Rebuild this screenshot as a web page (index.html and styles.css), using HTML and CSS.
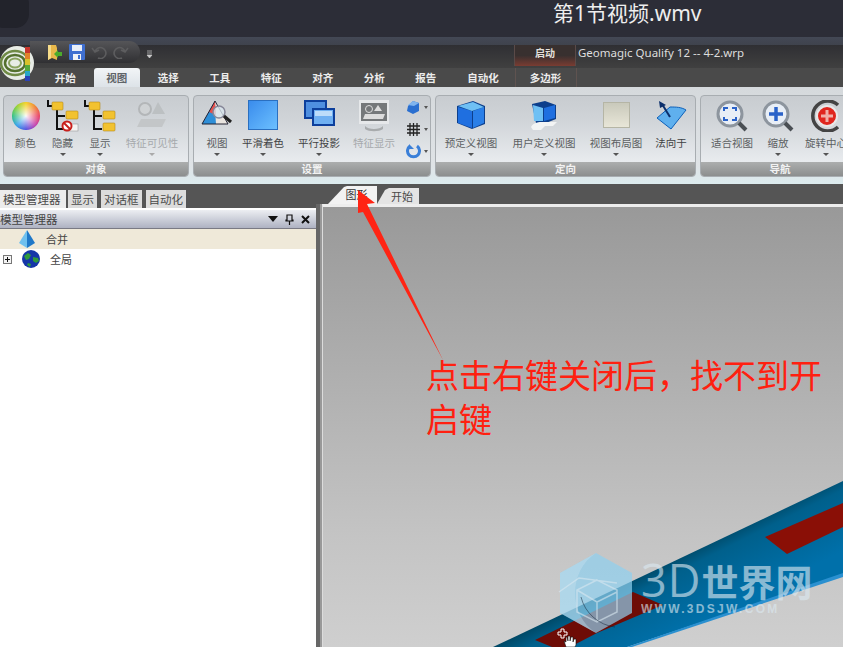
FILE: index.html
```html
<!DOCTYPE html>
<html lang="zh-CN">
<head>
  <meta charset="UTF-8" />
  <title>第1节视频.wmv</title>
  <link rel="stylesheet" href="styles.css">
</head>
<body>

<div class="stage">
  <!-- Player title bar -->
  <div class="player-bar">
    <div class="player-blob"></div>
    <div class="player-title">第1节视频.wmv</div>
  </div>
  <div class="app-band"></div>

  <!-- Application title row -->
  <div class="app-title">
    <div class="qat">
      <svg class="qat-icon" width="16" height="17" viewBox="0 0 16 17"><path d="M1 1h8l1 3v12l-5-2-4 2z" fill="#e9b84a"/><path d="M1 1h3v13l-3 2z" fill="#f6dc8a"/><path d="M7 10l4-4v2h4v4h-4v2z" fill="#4cab2c"/></svg>
      <svg class="qat-icon" width="16" height="16" viewBox="0 0 16 16"><rect width="16" height="16" rx="1" fill="#3f6fd0"/><rect x="3" y="1" width="10" height="6" fill="#e8eef8"/><rect x="4" y="10" width="8" height="6" fill="#f0f2f6"/><rect x="9" y="11" width="2" height="4" fill="#3f6fd0"/></svg>
      <svg class="qat-icon" width="16" height="14" viewBox="0 0 16 14"><path d="M4 7a5.500 5.500 0 1 1 3 6M1 3l3 4 4-2" fill="none" stroke="#5d5d5f" stroke-width="1.600"/></svg>
      <svg class="qat-icon" width="16" height="14" viewBox="0 0 16 14"><path d="M12 7a5.500 5.500 0 1 0-3 6M15 3l-3 4-4-2" fill="none" stroke="#5d5d5f" stroke-width="1.600"/></svg>
    </div>
    <svg class="qat-more" width="7" height="8" viewBox="0 0 7 8"><path d="M1 1h5M1 3h5M1 5l2.500 3L6 5z" fill="#ccc" stroke="#ccc" stroke-width=".7"/></svg>
    <div class="context-head">启动</div>
    <div class="doc-title">Geomagic Qualify 12 -- 4-2.wrp</div>
  </div>

  <!-- Ribbon tabs -->
  <div class="tabs">
    <div class="tab">开始</div>
    <div class="tab active"><span>视图</span></div>
    <div class="tab">选择</div>
    <div class="tab">工具</div>
    <div class="tab">特征</div>
    <div class="tab">对齐</div>
    <div class="tab">分析</div>
    <div class="tab">报告</div>
    <div class="tab tab-auto">自动化</div>
    <div class="tab tab-context">多边形</div>
  </div>

  <!-- Orb sits over the title row and the tabs -->
  <div class="orb">
    <svg width="36" height="37" viewBox="0 0 36 37">
      <circle cx="17" cy="18" r="17" fill="#e8ece6"/>
      <ellipse cx="15" cy="18" rx="14" ry="12" fill="none" stroke="#6f8a45" stroke-width="2.500"/>
      <ellipse cx="15" cy="18" rx="10" ry="8" fill="none" stroke="#54702e" stroke-width="2.500"/>
      <ellipse cx="15" cy="18" rx="6" ry="4.500" fill="#e8ece6" stroke="#8aa35f" stroke-width="2"/>
      <rect x="25" y="2" width="5" height="6" fill="#c8352c"/>
      <rect x="25" y="8" width="5" height="6" fill="#e0832a"/>
      <rect x="25" y="14" width="5" height="6" fill="#d8c22c"/>
      <rect x="25" y="20" width="5" height="6" fill="#55a83c"/>
      <rect x="25" y="26" width="5" height="5" fill="#2aa5c8"/>
      <rect x="25" y="31" width="5" height="5" fill="#2b42b8"/>
    </svg>
  </div>

  <!-- Ribbon -->
  <div class="ribbon">
    <div class="group group-object">
      <div class="items">
        <div class="item w37"><div class="icon"><div class="wheel"></div></div><div class="label">颜色</div></div>
        <div class="item w37">
          <div class="icon"><svg width="32" height="32" viewBox="0 0 32 32"><path d="M1 0v6h4M10 8v21h8M10 16h8" fill="none" stroke="#111" stroke-width="2"/><rect x="5" y="2" width="11" height="8" rx="1" fill="#f2c230" stroke="#b58a1a" stroke-width=".6"/><rect x="19" y="11" width="12" height="8" rx="1" fill="#f2c230" stroke="#b58a1a" stroke-width=".6"/><rect x="19" y="24" width="12" height="7" fill="#f4f4f2" stroke="#999" stroke-width=".6"/><circle cx="20" cy="26" r="4.500" fill="#fff" stroke="#c8201c" stroke-width="2"/><path d="M17 23l6 6" stroke="#c8201c" stroke-width="2"/></svg></div>
          <div class="label">隐藏</div><div class="caret"></div>
        </div>
        <div class="item w38">
          <div class="icon"><svg width="32" height="32" viewBox="0 0 32 32"><path d="M1 0v6h4M10 8v21h8M10 16h8" fill="none" stroke="#111" stroke-width="2"/><rect x="5" y="2" width="11" height="8" rx="1" fill="#f2c230" stroke="#b58a1a" stroke-width=".6"/><rect x="19" y="11" width="12" height="8" rx="1" fill="#f2c230" stroke="#b58a1a" stroke-width=".6"/><rect x="19" y="23" width="12" height="8" rx="1" fill="#f2c230" stroke="#b58a1a" stroke-width=".6"/></svg></div>
          <div class="label">显示</div><div class="caret"></div>
        </div>
        <div class="item w66 off">
          <div class="icon"><svg width="30" height="30" viewBox="0 0 30 30"><circle cx="8" cy="9" r="6" fill="#cfd2d4" stroke="#b3b6b8" stroke-width="2"/><path d="M21 2l7 12H15z" fill="#bcc0c2"/><path d="M4 19h25l-4 8H0z" fill="#c3c6c8"/></svg></div>
          <div class="label">特征可见性</div><div class="caret"></div>
        </div>
      </div>
      <div class="group-foot">对象</div>
    </div>

    <div class="group group-settings">
      <div class="items">
        <div class="item w46">
          <div class="icon"><svg width="32" height="26" viewBox="0 0 32 26"><path d="M14 1L1 24h14z" fill="#2f8fd8"/><path d="M14 1l13 23H15z" fill="#e9e5e0"/><path d="M14 1L8 12l7 3z" fill="#e8504c"/><path d="M1 24L14 1l13 23z" fill="none" stroke="#223" stroke-width="1"/><circle cx="18" cy="12" r="6" fill="#d9e6ee" fill-opacity=".8" stroke="#889" stroke-width="1.500"/><path d="M23 16l7 6" stroke="#222" stroke-width="3"/></svg></div>
          <div class="label">视图</div><div class="caret"></div>
        </div>
        <div class="item w46">
          <div class="icon"><div class="shade-square"></div></div>
          <div class="label dark">平滑着色</div><div class="caret"></div>
        </div>
        <div class="item w66">
          <div class="icon"><svg width="31" height="26" viewBox="0 0 31 26"><rect x="1" y="1" width="21" height="17" fill="#4f8fe0" stroke="#0d3f9c" stroke-width="2"/><rect x="9" y="9" width="21" height="16" fill="#6fb0f2" stroke="#0d3f9c" stroke-width="2"/><rect x="11" y="11" width="17" height="5" fill="#bcdcfa"/></svg></div>
          <div class="label dark">平行投影</div><div class="caret"></div>
        </div>
        <div class="item w44 off">
          <div class="icon"><svg width="30" height="32" viewBox="0 0 30 32"><rect width="30" height="24" fill="#e6e8ea"/><rect x="2" y="3" width="26" height="18" fill="#75787a"/><circle cx="10" cy="9" r="3.500" fill="none" stroke="#ddd"/><path d="M19 5l4 6h-8z" fill="#ddd"/><path d="M6 14h20l-2 5H4z" fill="#dcdcdc"/><path d="M6 26c3 4 15 4 18 0v3c-4 3-14 3-18 0z" fill="#a8abad"/></svg></div>
          <div class="label">特征显示</div>
        </div>
        <div class="small-col">
          <div class="small-row"><svg width="15" height="15" viewBox="0 0 15 15"><path d="M7 1l6 2v8l-6 3-6-3 1-5z" fill="#2a6fd0"/><path d="M7 1l6 2-5 3-6-1z" fill="#7fb4ee"/></svg><i></i></div>
          <div class="small-row"><svg width="15" height="15" viewBox="0 0 15 15"><path d="M1 4h13M1 7.500h13M1 11h13M4 1v13M7.500 1v13M11 1v13" stroke="#222" stroke-width="1.300"/></svg><i></i></div>
          <div class="small-row"><svg width="15" height="15" viewBox="0 0 15 15"><path d="M4 2a6 6 0 1 0 7 0" fill="none" stroke="#3a7fd8" stroke-width="3"/><path d="M3 0v5h5" fill="#3a7fd8"/></svg><i></i></div>
        </div>
      </div>
      <div class="group-foot">设置</div>
    </div>

    <div class="group group-orient">
      <div class="items">
        <div class="item w70">
          <div class="icon"><svg width="30" height="30" viewBox="0 0 30 30"><path d="M1 6l16-5 12 5v18l-13 5-15-6z" fill="#0d3f8c"/><path d="M2 7l14 4v17L2 23z" fill="#1f6fe0"/><path d="M17 11l11-4v16l-11 5z" fill="#2a7fe8"/><path d="M2 6l15-4 11 5-12 4z" fill="#6fc0f4"/></svg></div>
          <div class="label">预定义视图</div><div class="caret"></div>
        </div>
        <div class="item w76">
          <div class="icon"><svg width="27" height="30" viewBox="0 0 27 30"><path d="M1 4l13-3 11 4v14l-10 4H5z" fill="#0d3f8c"/><path d="M2 5l10 3v13H3z" fill="#6fc0f4"/><path d="M13 8l11-3v13l-11 3z" fill="#1f6fe0"/><path d="M0 27c3-5 8-5 12-5h14l-4 4h-8l-4 4H2z" fill="#f3f4f4"/></svg></div>
          <div class="label">用户定义视图</div><div class="caret"></div>
        </div>
        <div class="item w68">
          <div class="icon icon-low"><div class="layout-square"></div></div>
          <div class="label">视图布局图</div><div class="caret"></div>
        </div>
        <div class="item w42">
          <div class="icon"><svg width="31" height="30" viewBox="0 0 31 30"><path d="M1 18L14 7c6 0 11 0 16 3L15 29z" fill="#5fb0ee" stroke="#0d5fb8"/><path d="M21 21L3 1" stroke="#0b2f7c" stroke-width="0"/><path d="M14 17L6 4" stroke="#0b2f6c" stroke-width="2"/><path d="M3 1l7 4-6 3z" fill="#0b2f6c"/></svg></div>
          <div class="label dark">法向于</div>
        </div>
      </div>
      <div class="group-foot">定向</div>
    </div>

    <div class="group group-nav">
      <div class="items">
        <div class="item w62">
          <div class="icon"><svg width="32" height="32" viewBox="0 0 32 32"><circle cx="14" cy="14" r="12" fill="#e8eef6" stroke="#8d959e" stroke-width="3"/><path d="M8 11V8h4M16 8h4v3M20 17v3h-4M12 20H8v-3" fill="none" stroke="#2a62c8" stroke-width="2"/><path d="M23 23l7 7" stroke="#4a4f54" stroke-width="4"/></svg></div>
          <div class="label">适合视图</div>
        </div>
        <div class="item w30">
          <div class="icon"><svg width="32" height="32" viewBox="0 0 32 32"><circle cx="14" cy="14" r="12" fill="#e8eef6" stroke="#8d959e" stroke-width="3"/><path d="M7 14h14M14 7v14" stroke="#2a62c8" stroke-width="3.500"/><path d="M23 23l7 7" stroke="#4a4f54" stroke-width="4"/></svg></div>
          <div class="label">缩放</div><div class="caret"></div>
        </div>
        <div class="item w66">
          <div class="icon"><svg width="34" height="32" viewBox="0 0 34 32"><path d="M29 5a15 15 0 1 0 0 22" fill="none" stroke="#444" stroke-width="3.500"/><circle cx="18" cy="16" r="10" fill="#e0261e" stroke="#e8e8e8" stroke-width="2"/><path d="M12 16h12M18 10v12" stroke="#f0b0a8" stroke-width="3"/></svg></div>
          <div class="label">旋转中心</div><div class="caret"></div>
        </div>
      </div>
      <div class="group-foot">导航</div>
    </div>
  </div>

  <!-- Work area -->
  <div class="work">
    <div class="side">
      <div class="side-tabs">
        <div class="side-tab active">模型管理器</div>
        <div class="side-tab">显示</div>
        <div class="side-tab">对话框</div>
        <div class="side-tab">自动化</div>
      </div>
      <div class="panel">
        <div class="panel-head">
          <span>模型管理器</span>
          <div class="panel-tools">
            <svg width="10" height="6" viewBox="0 0 10 6"><path d="M0 0h10L5 6z" fill="#111"/></svg>
            <svg width="9" height="11" viewBox="0 0 9 11"><path d="M2 1h5v5h1v1H1V6h1zM4.500 7v4" fill="none" stroke="#111" stroke-width="1.200"/></svg>
            <svg width="9" height="9" viewBox="0 0 9 9"><path d="M1 1l7 7M8 1L1 8" stroke="#111" stroke-width="2"/></svg>
          </div>
        </div>
        <div class="tree-row selected">
          <svg class="tree-icon" width="18" height="18" viewBox="0 0 18 18"><path d="M9 0L1 13l8 5z" fill="#6fc0ee"/><path d="M9 0l8 13-8 5z" fill="#1f78c8"/></svg>
          <span>合并</span>
        </div>
        <div class="tree-row">
          <div class="plus"></div>
          <svg class="tree-icon tree-globe" width="18" height="18" viewBox="0 0 18 18"><circle cx="9" cy="9" r="9" fill="#1536a8"/><path d="M2 6l4-3 3 2-2 4-3 1zM11 7l5 1 1 3-3 2-3-2zM6 13l3 1-1 3-3-2z" fill="#2f9a3c"/></svg>
          <span>全局</span>
        </div>
      </div>
    </div>

    <div class="view">
      <div class="view-tabs">
        <div class="view-tab active">图形</div>
        <div class="view-tab">开始</div>
      </div>
      <div class="viewport">
        <svg class="scene" width="521" height="441" viewBox="322 206 521 441">
          <defs>
            <linearGradient id="beam" gradientUnits="userSpaceOnUse" x1="690" y1="540" x2="725" y2="610">
              <stop offset="0" stop-color="#003c52"/>
              <stop offset=".3" stop-color="#00608c"/>
              <stop offset="1" stop-color="#0070aa"/>
            </linearGradient>
          </defs>
          <path d="M843 481L493 647h134l216-72z" fill="url(#beam)"/>
          <path d="M843 573L627 647h5l211-70z" fill="#2a90d0"/>
          <path d="M765 537l78-34v24l-56 27z" fill="#8a0f06"/>
          <path d="M535 640l98-48 30 13-66 28-27 14h-18z" fill="#6e0c06"/>
          <!-- watermark logo -->
          <path d="M596 553l36 20v40l-36 20-36-20v-40z" fill="#8fd0f0" fill-opacity=".7"/>
          <path d="M596 553l-36 20v40l36 20c-28-18-28-62 0-80z" fill="#cfe6f2" fill-opacity=".35"/>
          <path d="M617 583l-38-5-20 14M597 580l-20 10v22l20 10 20-10v-22zM597 602l-20-12M597 602l20-10M597 602v20" fill="none" stroke="#d8e8f0" stroke-opacity=".6" stroke-width="1.500"/>
          <path d="M581 597a40 40 0 0 0 34 30" fill="none" stroke="#123" stroke-opacity=".5" stroke-width="1"/>
          <!-- cursor -->
          <path d="M561 629h3v3h3v3h-3v3h-3v-3h-3v-3h3z" fill="none" stroke="#fff" stroke-width="1"/>
          <path d="M566 647l-2-6 2 1v-5h1l1 4v-5h2v5l1-4h2v5l1-3h2v6l-1 2z" fill="#fff" stroke="#111" stroke-width=".6"/>
        </svg>
        <div class="mark">
          <div class="mark-name"><span>3D</span>世界网</div>
          <div class="mark-url">WWW.3DSJW.COM</div>
        </div>
      </div>
    </div>
  </div>

  <!-- Annotation over the screenshot -->
  <svg class="arrow" width="100" height="180" viewBox="350 185 100 180"><path d="M358 190l17 13-8 1 76 156-80-148-5 1z" fill="#ff2414"/></svg>
  <div class="note">点击右键关闭后，找不到开启键</div>
</div>

</body>
</html>
```

FILE: styles.css
```css
* { box-sizing: border-box; margin: 0; padding: 0; }

body {
  font-family: 'Noto Sans CJK SC', 'Noto Sans', sans-serif;
  background: #555;
  overflow: hidden;
}

.stage {
  position: relative;
  width: 843px;
  height: 647px;
  overflow: hidden;
}

/* Player bar */
.player-bar {
  position: relative;
  height: 37px;
  background: #2c2d37;
  padding-left: 553px;
}

.player-blob {
  position: absolute;
  left: -10px;
  top: -10px;
  width: 39px;
  height: 38px;
  background: #22232b;
  border-radius: 14px;
}

.player-title {
  font-family: 'Noto Sans', 'Noto Sans CJK SC', sans-serif;
  font-size: 21px;
  line-height: 26px;
  color: #eee;
}

.app-band {
  height: 8px;
  background: linear-gradient(#434855, #3f434d);
}

/* App title row */
.app-title {
  position: relative;
  height: 23px;
  display: flex;
  align-items: center;
  background: linear-gradient(#2f2f33, #404040);
}

.qat {
  position: absolute;
  left: 30px;
  top: -4px;
  width: 110px;
  height: 22px;
  border-radius: 0 12px 12px 0;
  background: linear-gradient(#555558, #303033);
  display: flex;
  align-items: center;
  padding-left: 17px;
  gap: 6px;
}

.qat-icon:nth-child(3) { margin-left: 0; }

.qat-more {
  position: absolute;
  left: 146px;
  top: 5px;
}

.context-head {
  position: absolute;
  left: 514px;
  top: 0;
  width: 62px;
  height: 21px;
  text-align: center;
  font-size: 10px;
  font-weight: 700;
  line-height: 15px;
  color: #e4e0dc;
  background: linear-gradient(#38302f 50%, #7a3c32);
  border-left: 1px solid #5a4a48;
  border-right: 1px solid #5a4a48;
}

.doc-title {
  position: absolute;
  left: 578px;
  top: 0;
  font-family: 'Noto Sans', sans-serif;
  font-size: 11.500px;
  line-height: 15px;
  color: #ddd;
  white-space: nowrap;
}

/* Ribbon tabs */
.tabs {
  height: 19px;
  display: flex;
  padding-left: 39.500px;
  background: #4a4a4a;
}

.tab {
  width: 51.500px;
  height: 19px;
  text-align: center;
  font-size: 10.500px;
  font-weight: 700;
  line-height: 19px;
  color: #ececec;
}

.tab.active { padding: 0 3px; }

.tab.active span {
  display: block;
  height: 19px;
  background: linear-gradient(#f2f5f7, #dde3e8);
  border-radius: 3px 3px 0 0;
  color: #5f6468;
}

.tab-auto { width: 63px; }

.tab-context {
  width: 62px;
  border-left: 1px solid #5f5350;
  border-right: 1px solid #5f5350;
}

.orb {
  position: absolute;
  left: 0;
  top: 45px;
}

/* Ribbon */
.ribbon {
  height: 97px;
  display: flex;
  gap: 4px;
  padding: 8px 0 0 3px;
  overflow: hidden;
  background: linear-gradient(#d5d9dc, #dfe3e6 80%, #dcebee);
}

.group {
  flex: none;
  height: 82px;
  display: flex;
  flex-direction: column;
  border: 1px solid #a8adb1;
  border-radius: 4px;
  overflow: hidden;
  background: linear-gradient(#c8ccd0, #d0d4d8 30%, #e8ebee 82%);
}

.group-object { width: 186px; }
.group-settings { width: 238px; }
.group-orient { width: 261px; }
.group-nav { width: 160px; }

.items {
  flex: 1;
  display: flex;
}

.group-object .items { padding-left: 3px; }

.group-foot {
  height: 14px;
  text-align: center;
  font-size: 10.500px;
  font-weight: 700;
  line-height: 14px;
  color: #f2f2f2;
  background: linear-gradient(#acaeae, #8c8e8e);
}

.item {
  flex: none;
  display: flex;
  flex-direction: column;
  align-items: center;
  padding-top: 4px;
}

.w30 { width: 30px; }
.w37 { width: 37px; }
.w38 { width: 38px; }
.w42 { width: 42px; }
.w44 { width: 44px; }
.w46 { width: 46px; }
.w62 { width: 62px; }
.w66 { width: 66px; }
.w68 { width: 68px; }
.w70 { width: 70px; }
.w76 { width: 76px; }

.icon {
  height: 32px;
  display: flex;
  align-items: flex-start;
  justify-content: center;
}

.icon-low { padding-top: 2px; }

.label {
  margin-top: 4px;
  font-size: 10.500px;
  line-height: 13px;
  color: #5c5f62;
  white-space: nowrap;
}

.label.dark { color: #3f4143; }

.off .label { color: #a6a9ac; }

.caret {
  margin-top: 4px;
  border-left: 3px solid transparent;
  border-right: 3px solid transparent;
  border-top: 3px solid #555;
}

.off .caret { border-top-color: #aaa; }

.wheel {
  width: 28px;
  height: 28px;
  margin-top: 2px;
  border-radius: 50%;
  background:
    radial-gradient(circle, rgba(255,255,255,.95), rgba(255,255,255,0) 70%),
    conic-gradient(#f5d020, #f08030, #e83c60, #c040b0, #5050e0, #30a0e8, #30c080, #90d030, #f5d020);
}

.shade-square {
  width: 30px;
  height: 30px;
  border: 1px solid #2a6fc0;
  background: linear-gradient(135deg, #3a8cec, #6cc0ff);
}

.layout-square {
  width: 27px;
  height: 26px;
  border: 1px solid #b5b5a5;
  background: linear-gradient(#c9c9bb, #e8e6d8);
}

.small-col {
  width: 34px;
  padding: 4px 0 0 10px;
  display: flex;
  flex-direction: column;
  gap: 7px;
}

.small-row {
  display: flex;
  align-items: center;
  gap: 3px;
}

.small-row i {
  border-left: 2px solid transparent;
  border-right: 2px solid transparent;
  border-top: 3px solid #555;
}

/* Work area */
.work {
  height: 463px;
  display: flex;
  background: #555;
}

.side {
  width: 316px;
  display: flex;
  flex-direction: column;
}

.side-tabs {
  height: 24px;
  padding-top: 6px;
  display: flex;
}

.side-tab {
  height: 18px;
  margin-right: 2px;
  padding: 0 3px;
  font-size: 11.500px;
  line-height: 18px;
  color: #4a4a4a;
  background: #dcdcdc;
  white-space: nowrap;
}

.side-tab:nth-child(3), .side-tab:nth-child(4) { margin-left: 2px; }

.side-tab.active {
  width: 66px;
  background: #ececec;
}

.panel {
  flex: 1;
  background: #fff;
  padding-top: 2px;
}

.panel-head {
  height: 19px;
  display: flex;
  align-items: center;
  justify-content: space-between;
  padding-right: 6px;
  font-size: 11.500px;
  color: #444;
  background: linear-gradient(#eceef2, #aeb2c2);
  border-bottom: 1px solid #7a7a84;
}

.panel-tools {
  display: flex;
  align-items: center;
  gap: 7px;
}

.tree-row {
  height: 20px;
  display: flex;
  align-items: center;
  padding-left: 18px;
  font-size: 11px;
  color: #444;
}

.tree-row.selected { background: #efe9d9; }

.tree-icon { margin-right: 10px; }

.tree-globe { margin-left: 4px; }

.plus {
  width: 9px;
  height: 9px;
  margin-left: -15px;
  margin-right: 6px;
  border: 1px solid #777;
  background:
    linear-gradient(#111, #111) center / 5px 1px no-repeat,
    linear-gradient(#111, #111) center / 1px 5px no-repeat,
    #f4f4f4;
}

.view {
  position: relative;
  width: 527px;
  margin-left: 0;
  padding-left: 6px;
  background: linear-gradient(90deg, #666 4px, #999 4px, #999 6px, transparent 6px);
}

.view-tabs {
  height: 20px;
  margin-left: -6px;
  padding: 4px 0 0 12px;
  display: flex;
  background: #555;
}

.view-tab {
  width: 42px;
  height: 16px;
  padding-left: 8px;
  text-align: center;
  font-size: 11px;
  line-height: 16px;
  color: #4a4a4a;
  background: #e4e4e4;
  clip-path: polygon(0 100%, 8px 2px, 12px 0, 100% 0, 100% 100%);
}

.view-tab.active {
  width: 49px;
  height: 18px;
  margin-top: -2px;
  padding-left: 8px;
  background: #f2f2f2;
  color: #333;
  clip-path: polygon(0 100%, 16px 1px, 19px 0, 100% 0, 100% 100%);
}

.viewport {
  position: relative;
  height: 443px;
  overflow: hidden;
  border-top: 3px solid #ededed;
  border-left: 1px solid #dcdcdc;
  background: linear-gradient(#999, #c4c4c4 75%, #cfcfcf);
}

.scene {
  position: absolute;
  left: -1px;
  top: -1px;
}

.mark {
  position: absolute;
  left: 318px;
  top: 351px;
  color: #dbe8f0;
  opacity: .62;
  white-space: nowrap;
}

.mark-name {
  font-size: 37px;
  font-weight: 700;
  line-height: 44px;
}

.mark-name span {
  font-family: 'Open Sans', sans-serif;
  font-size: 45px;
  font-weight: 400;
  letter-spacing: 1px;
}

.mark-url {
  font-family: 'Liberation Sans', sans-serif;
  font-size: 12px;
  font-weight: 700;
  line-height: 13px;
  letter-spacing: 2.300px;
}

/* Annotation */
.arrow {
  position: absolute;
  left: 350px;
  top: 185px;
}

.note {
  position: absolute;
  left: 426px;
  top: 352px;
  width: 400px;
  font-size: 33px;
  line-height: 44px;
  color: #ff2010;
}
```
